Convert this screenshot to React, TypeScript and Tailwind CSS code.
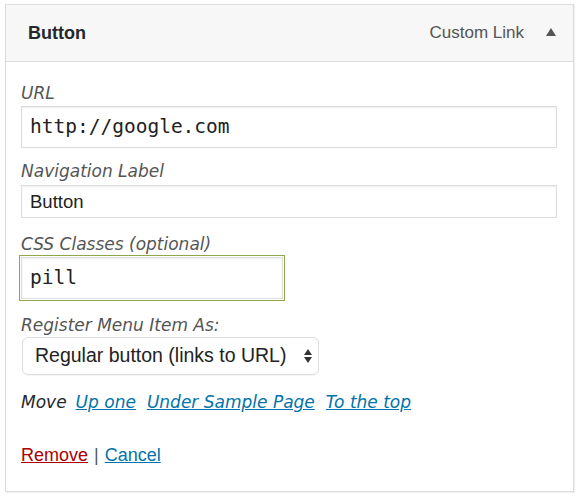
export default function App() {
  const sans = "font-['Liberation_Sans',Arial,sans-serif]";
  const ital = "font-['DejaVu_Sans','Liberation_Sans',sans-serif] italic";
  return (
    <div className={`w-[582px] h-[499px] bg-white pt-[4px] pl-[5px] ${sans}`}>
      <div className="w-[569px] h-[488px] border border-[#dcdcdc] shadow-[1px_1px_1px_rgba(0,0,0,0.06)] bg-white">
        {/* header */}
        <div className="h-[57px] bg-[#f7f7f7] border-b border-[#dcdcdc] flex items-center pl-[22px] pr-[17px]">
          <span className="text-[18px] font-bold text-[#23282d]">Button</span>
          <span className="ml-auto text-[17px] text-[#555]">Custom Link</span>
          <span className="ml-[22px] mt-[-2px] w-0 h-0 border-l-[5px] border-r-[5px] border-b-[8px] border-l-transparent border-r-transparent border-b-[#555]" />
        </div>

        {/* body */}
        <div className="pl-[15px] pr-[16px] pt-[21px] text-[#555]">
          <label className={`block text-[17px] leading-[20px] ${ital}`}>URL</label>
          <div className="mt-[3px] w-[536px] h-[42px] border border-[#ddd] shadow-[inset_0_1px_2px_rgba(0,0,0,0.07)] flex items-center pl-[8px] text-[19.5px] text-[#222] font-['DejaVu_Sans_Mono',monospace]">
            http://google.com
          </div>

          <label className={`block mt-[13px] text-[17px] leading-[20px] ${ital}`}>Navigation Label</label>
          <div className="mt-[4px] w-[536px] h-[33px] border border-[#ddd] shadow-[inset_0_1px_2px_rgba(0,0,0,0.07)] flex items-center pl-[8px] text-[18.5px] text-[#222]">
            Button
          </div>

          <label className={`block mt-[16px] text-[17px] leading-[20px] ${ital}`}>CSS Classes (optional)</label>
          <div className="mt-[1px] ml-[-2px] w-[266px] h-[46px] border border-[#8fa64b] p-[1px]">
            <div className="w-full h-full border border-[#ddd] shadow-[inset_0_1px_2px_rgba(0,0,0,0.07)] flex items-center pl-[8px] text-[19.5px] text-[#222] font-['DejaVu_Sans_Mono',monospace]">
              pill
            </div>
          </div>

          <label className={`block mt-[14px] text-[17px] leading-[20px] ${ital}`}>Register Menu Item As:</label>
          <div className="mt-[2px] ml-[1px] w-[297px] h-[38px] border border-[#ddd] rounded-[6px] flex items-center pl-[12px] pr-[6px] text-[19.5px] text-[#222] shadow-[0_1px_1px_rgba(0,0,0,0.04)]">
            <span>Regular button (links to URL)</span>
            <span className="ml-auto flex flex-col items-center gap-[2px]">
              <span className="w-0 h-0 border-l-[4px] border-r-[4px] border-b-[6px] border-l-transparent border-r-transparent border-b-[#333]" />
              <span className="w-0 h-0 border-l-[4px] border-r-[4px] border-t-[6px] border-l-transparent border-r-transparent border-t-[#333]" />
            </span>
          </div>

          <div className={`mt-[16px] text-[17px] text-[#23282d] flex gap-[11px] leading-[22px] ${ital}`}>
            <span>Move</span>
            <a className="text-[#0073aa] underline ml-[-2px]">Up one</a>
            <a className="text-[#0073aa] underline">Under Sample Page</a>
            <a className="text-[#0073aa] underline">To the top</a>
          </div>

          <div className="mt-[31px] text-[18px] text-[#555] leading-[22px]">
            <a className="text-[#a00] underline">Remove</a>
            <span className="mx-[6px]">|</span>
            <a className="text-[#0073aa] underline">Cancel</a>
          </div>
        </div>
      </div>
    </div>
  );
}
